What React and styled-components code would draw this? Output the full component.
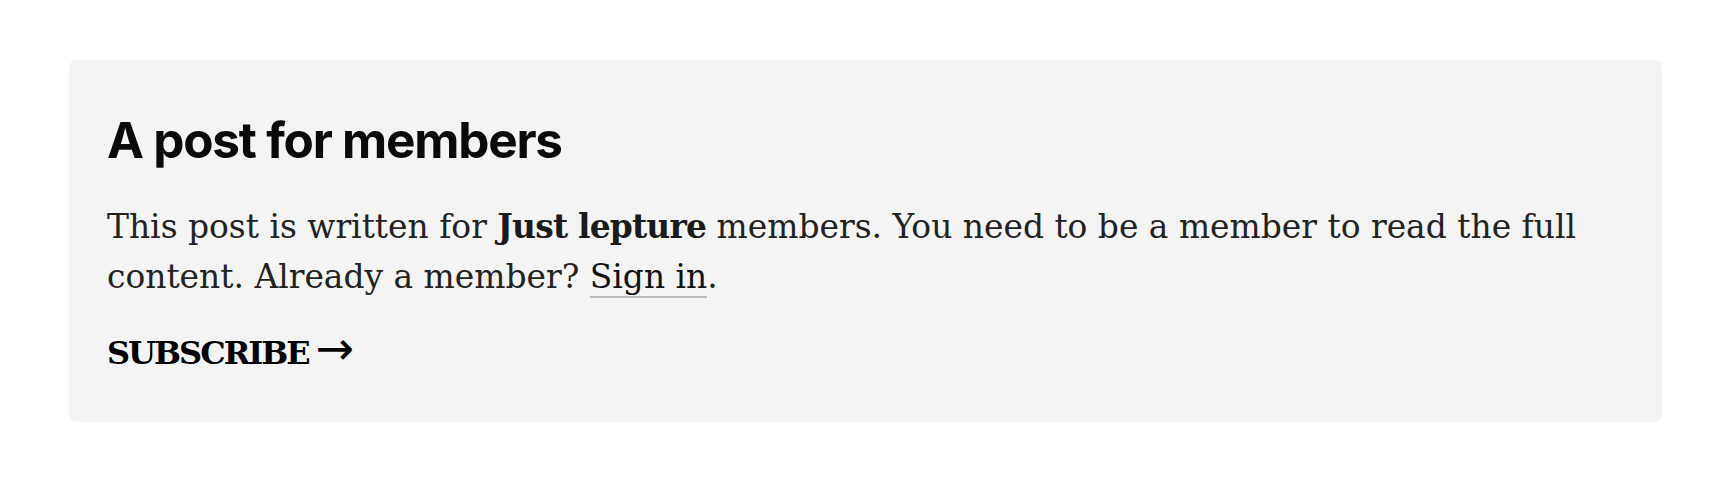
import React from 'react';
import styled, { createGlobalStyle } from 'styled-components';

const GlobalStyle = createGlobalStyle`
  html, body {
    margin: 0;
    padding: 0;
    background: #fff;
  }
`;

const Page = styled.div`
  padding: 60px 68px 60px 69px;
`;

const Card = styled.section`
  display: flex;
  flex-direction: column;
  align-items: flex-start;
  padding: 51px 36px 45px 38px;
  background: #f4f4f4;
  border-radius: 8px;
`;

const Title = styled.h2`
  margin: 0;
  font-family: Inter, 'Liberation Sans', sans-serif;
  font-weight: 700;
  font-size: 49.5px;
  line-height: 1.2;
  letter-spacing: -0.025em;
  color: #0a0a0a;
`;

const Body = styled.p`
  margin: 32px 0 0;
  font-family: 'DejaVu Serif', 'Liberation Serif', serif;
  font-size: 32.9px;
  line-height: 50px;
  color: #222;

  strong {
    color: #1a1a1a;
    letter-spacing: -0.8px;
  }
`;

const Link = styled.a`
  color: #111;
  text-decoration: none;
  border-bottom: 2px solid #bdbdbd;
`;

const Subscribe = styled.a`
  display: block;
  margin-top: 27px;
  font-family: 'DejaVu Serif', 'Liberation Serif', serif;
  font-weight: 700;
  font-size: 32px;
  line-height: 48px;
  letter-spacing: -2px;
  color: #000;
  text-decoration: none;
`;

const Arrow = styled.span`
  margin-left: 7px;
  font-family: 'DejaVu Sans', sans-serif;
  font-weight: 400;
  font-size: 46px;
  line-height: 0;
  letter-spacing: 0;
`;

const App = () => (
  <Page>
    <GlobalStyle />
    <Card>
      <Title>A post for members</Title>
      <Body>
        This post is written for <strong>Just lepture</strong> members. You need to be a member to read
        the full content. Already a member? <Link href="#">Sign in</Link>.
      </Body>
      <Subscribe href="#">
        SUBSCRIBE<Arrow>→</Arrow>
      </Subscribe>
    </Card>
  </Page>
);

export default App;
